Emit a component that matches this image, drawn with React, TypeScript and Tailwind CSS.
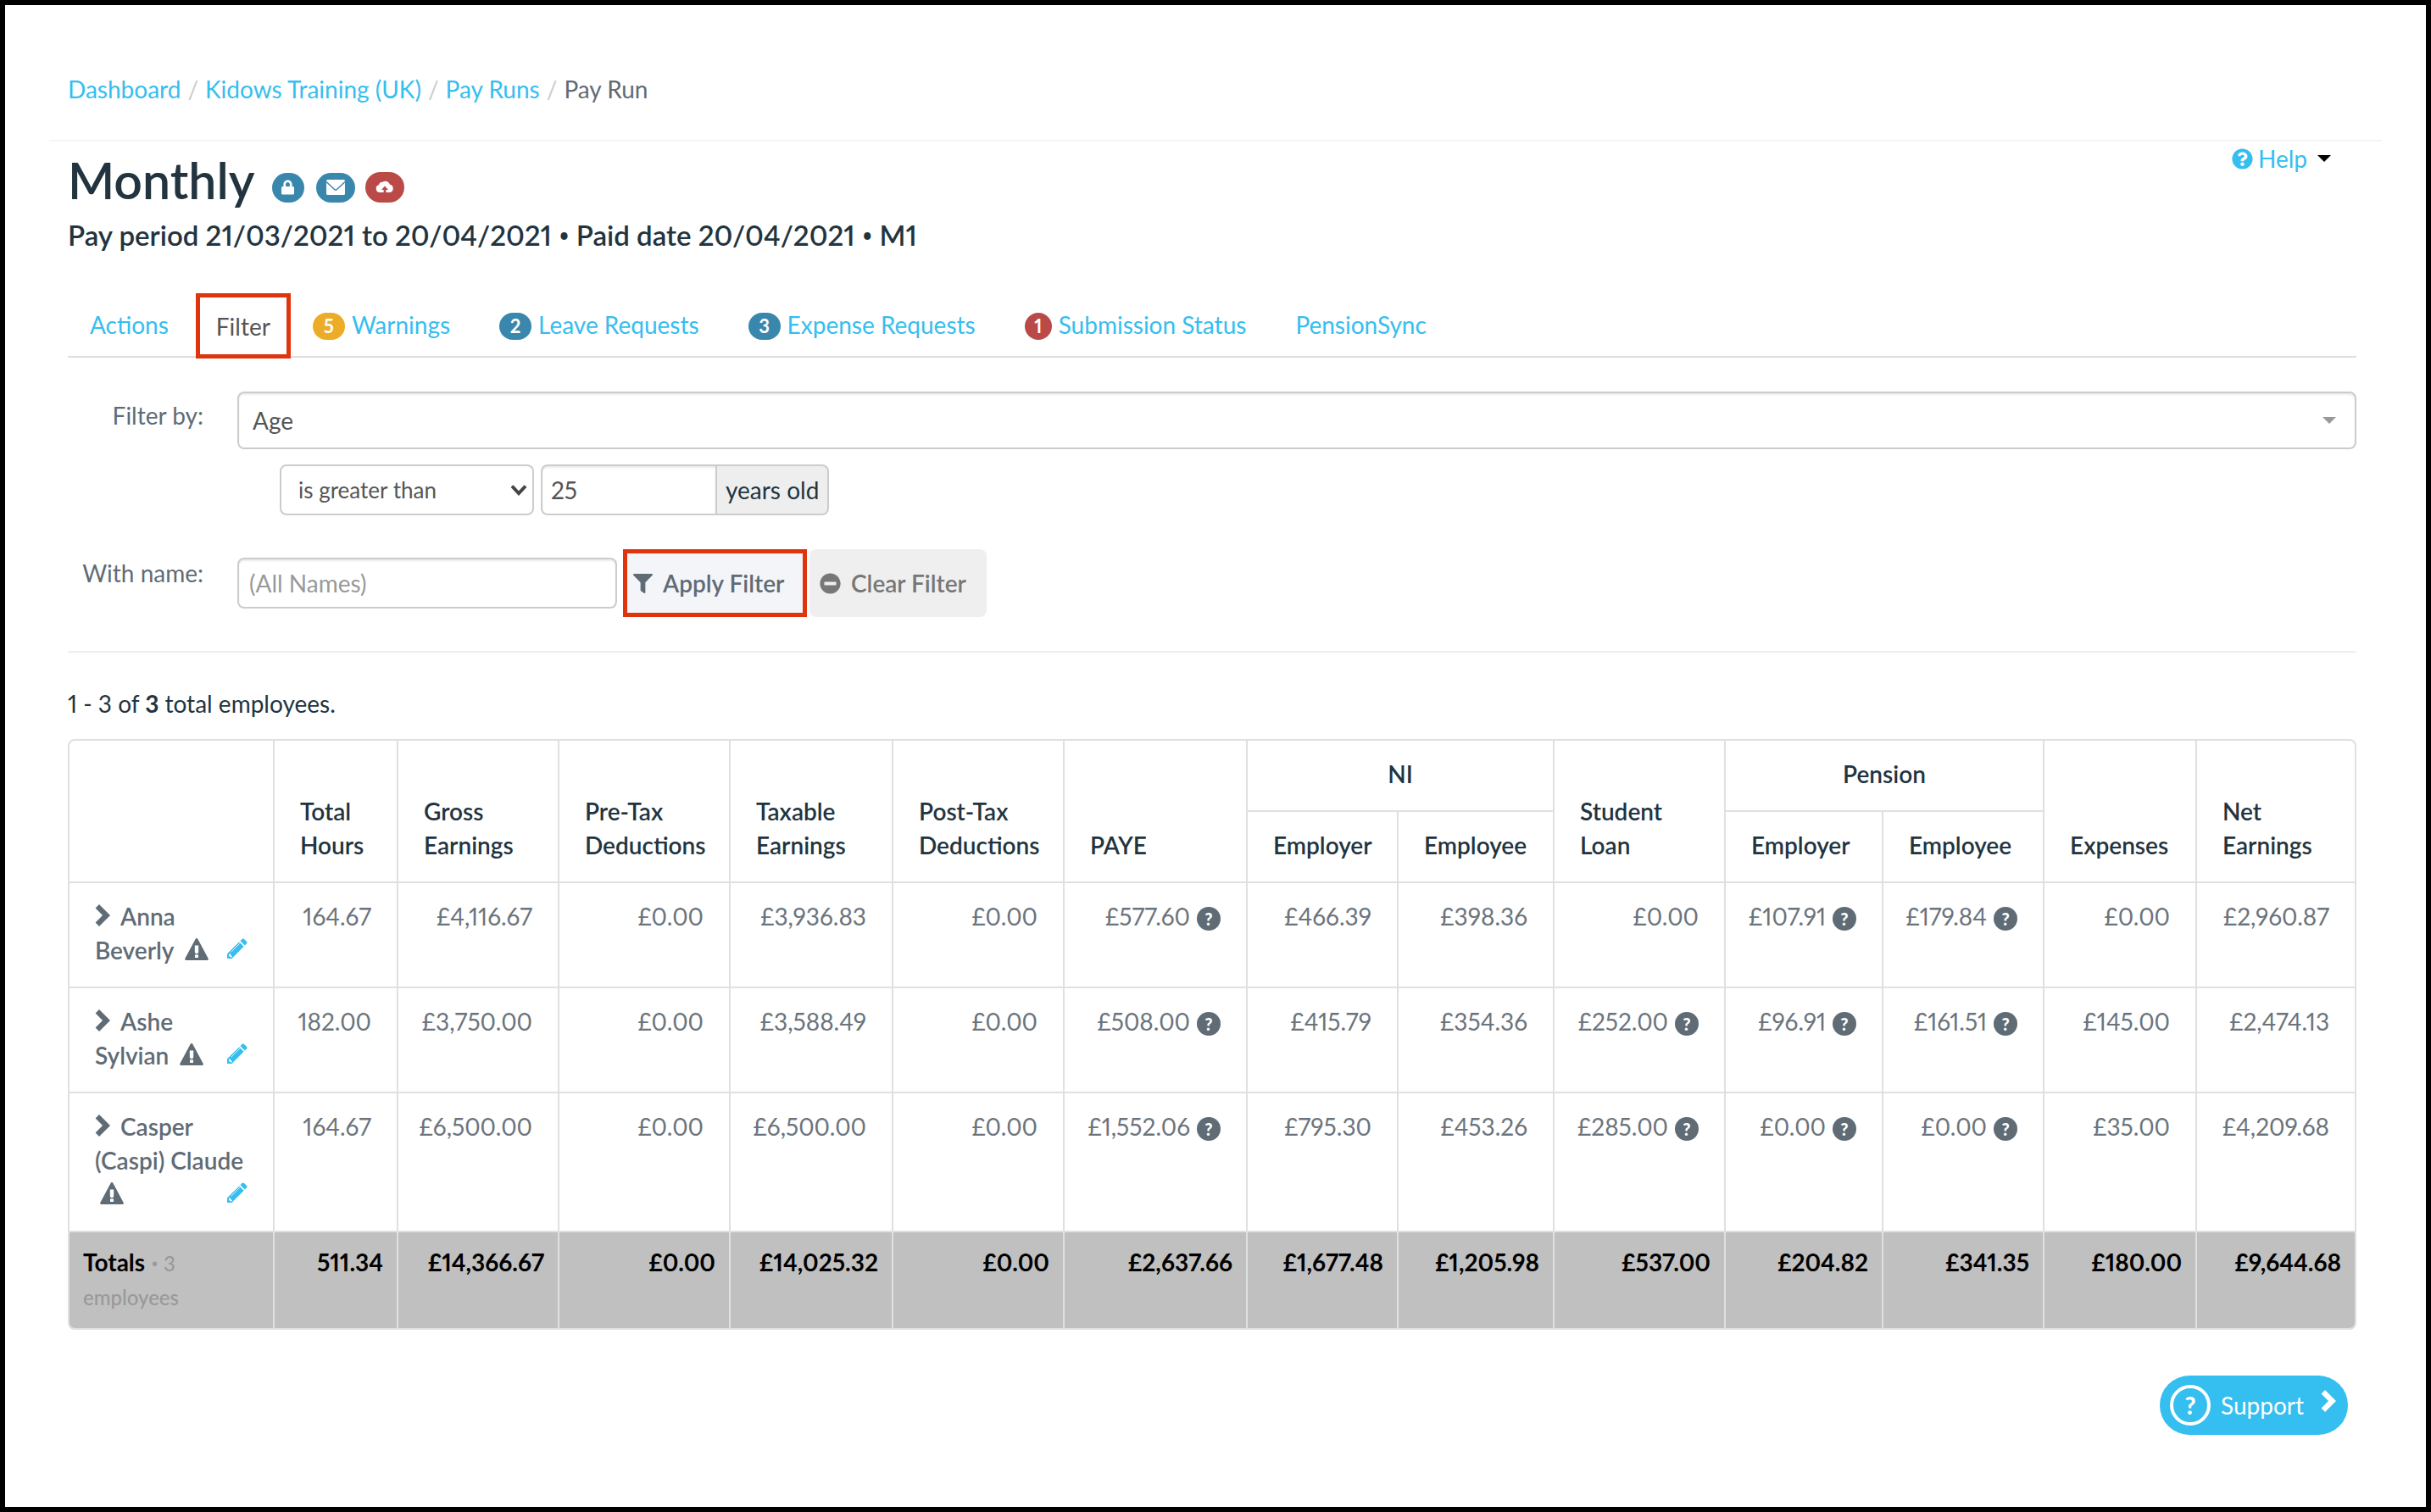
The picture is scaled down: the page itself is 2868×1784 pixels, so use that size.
import { useState } from "react";
import { FaFilter, FaLock, FaMinusCircle, FaQuestionCircle } from "react-icons/fa";

const tabs = [
  { name: "Actions" },
  { name: "Filter" },
  { name: "Warnings", count: 5, badge: "w-[38px] bg-[#edac27]" },
  { name: "Leave Requests", count: 2, badge: "w-[38px] bg-[#3a87ad]" },
  { name: "Expense Requests", count: 3, badge: "w-[38px] bg-[#3a87ad]" },
  { name: "Submission Status", count: 1, badge: "w-8 bg-[#b94a48]" },
  { name: "PensionSync" },
];

// hint marks the columns that carry a "?" after the amount
const employees = [
  {
    name: "Anna Beverly",
    cells: ["164.67", "£4,116.67", "£0.00", "£3,936.83", "£0.00", "£577.60", "£466.39", "£398.36", "£0.00", "£107.91", "£179.84", "£0.00", "£2,960.87"],
    hint: [5, 9, 10],
  },
  {
    name: "Ashe Sylvian",
    cells: ["182.00", "£3,750.00", "£0.00", "£3,588.49", "£0.00", "£508.00", "£415.79", "£354.36", "£252.00", "£96.91", "£161.51", "£145.00", "£2,474.13"],
    hint: [5, 8, 9, 10],
  },
  {
    name: "Casper (Caspi) Claude",
    cells: ["164.67", "£6,500.00", "£0.00", "£6,500.00", "£0.00", "£1,552.06", "£795.30", "£453.26", "£285.00", "£0.00", "£0.00", "£35.00", "£4,209.68"],
    hint: [5, 8, 9, 10],
  },
];

const totals = ["511.34", "£14,366.67", "£0.00", "£14,025.32", "£0.00", "£2,637.66", "£1,677.48", "£1,205.98", "£537.00", "£204.82", "£341.35", "£180.00", "£9,644.68"];

const line = "border-[#dfe0e0]";
const headCell = `border-r-2 border-b-2 last:border-r-0 ${line} px-[30px] pt-[19px] pb-[23px] text-left align-bottom font-semibold text-[#22343f]`;
const field = "h-[60px] border-2 border-[#ccc] bg-white text-[#555] shadow-[inset_0_2px_2px_rgba(0,0,0,0.08)]";

function Chevron({ className }: { className: string }) {
  return (
    <svg viewBox="0 0 18 26" className={className} fill="currentColor" aria-hidden="true">
      <path d="M5 0 18 13 5 26 .6 21.600 9 13 .6 4.400z" />
    </svg>
  );
}

function Warning() {
  return (
    <svg viewBox="0 0 28 26" className="ml-1.5 inline-block h-[26px] w-7 align-[-1px]" aria-label="Warning">
      <path d="M12.6.9a1.6 1.6 0 0 1 2.8 0l12.3 23a1.4 1.4 0 0 1-1.2 2.1h-25a1.4 1.4 0 0 1-1.2-2.1z" fill="#5f6b75" />
      <path d="M11.8 8.6h4.4v7.6l-1 2h-2.4l-1-2zM12 19.6h4V23h-4z" fill="#fff" />
    </svg>
  );
}

function Pencil() {
  return (
    <svg viewBox="0 0 24 24" className="inline-block h-6 w-6 align-[1px]" fill="#35bef0" aria-hidden="true">
      <path d="M17.4 1.2a2 2 0 0 1 2.8 0l2.6 2.6a2 2 0 0 1 0 2.8L20.800 8.600 15.400 3.200z" />
      <path d="M14.200 4.400l5.400 5.400L7 22.600 5.600 24H0v-5.600L1.400 17z" />
      <path d="M4.600 16.400 15 6" stroke="#fff" strokeWidth="0.8" />
      <path d="M2.200 18.400l1.600.2.600 1.800 1.600.600-.8 1.400-1.800-.4-1.400-1.600z" fill="#fff" />
    </svg>
  );
}

function Hint() {
  return (
    <span className="ml-2 inline-block h-7 w-7 rounded-full bg-[#5f6b75] text-center text-[20px] leading-7 font-black text-white">
      ?
    </span>
  );
}

export default function App() {
  const [active, setActive] = useState("Filter");
  const [age, setAge] = useState("25");
  const [name, setName] = useState("");

  return (
    <div className="min-h-screen border-6 border-black bg-white px-13 pt-[79px] pb-10 font-['Lato',sans-serif] text-[28px] leading-10 text-[#22343f] proportional-nums">
      {/* Breadcrumb */}
      <nav className="border-b-2 border-[#f5f5f5] pb-10 pl-[22px]">
        <ol className="flex gap-2 text-[#35bef0]">
          <li><a href="#dashboard">Dashboard</a></li>
          <li className="text-[#ccc]">/</li>
          <li><a href="#company">Kidows Training (UK)</a></li>
          <li className="text-[#ccc]">/</li>
          <li><a href="#payruns">Pay Runs</a></li>
          <li className="text-[#ccc]">/</li>
          <li className="text-[#5f6b75]">Pay Run</li>
        </ol>
      </nav>

      <main className="pr-[30px] pl-[22px]">
        {/* Title */}
        <header className="flex items-start justify-between">
          <div className="pt-2">
            <div className="flex items-center">
              <h1 className="text-[59px] leading-[76px] font-semibold">Monthly</h1>
              <span className="mt-4 ml-5 flex h-[35px] w-[38px] items-center justify-center rounded-full bg-[#3a87ad] text-white">
                <FaLock className="h-[18px] w-[15px]" />
              </span>
              <span className="mt-4 ml-3.5 flex h-[35px] w-[46px] items-center justify-center rounded-full bg-[#3a87ad]">
                <svg viewBox="0 0 22 18" className="h-[18px] w-[22px]" aria-label="Emailed">
                  <rect width="22" height="18" rx="1.5" fill="#fff" />
                  <path d="M0 2.5 9.6 11.4a2 2 0 0 0 2.8 0L22 2.5" fill="none" stroke="#3a87ad" strokeWidth="1.4" />
                </svg>
              </span>
              <span className="mt-4 ml-3 flex h-9 w-[46px] items-center justify-center rounded-full bg-[#b94a48]">
                <svg viewBox="0 0 22 16" className="h-4 w-[22px]" aria-label="Submission">
                  <path d="M5 14a4.6 4.6 0 0 1-1-9A4.4 4.4 0 0 1 8.4 1.8 5.5 5.5 0 0 1 17 4.8 4.7 4.7 0 0 1 17 14z" fill="#fff" />
                  <path d="M11 6.5 15 11h-2.6v4H9.6v-4H7z" fill="#b94a48" />
                </svg>
              </span>
            </div>
            <p className="mt-1.5 text-[33px] font-semibold">
              Pay period 21/03/2021 to 20/04/2021 <span className="font-['Open_Sans']">•</span> Paid date
              20/04/2021 <span className="font-['Open_Sans']">•</span> M1
            </p>
          </div>
          <button type="button" className="mr-[30px] flex items-center text-[#35bef0]">
            <FaQuestionCircle className="mr-1.5 h-[25px] w-[25px]" />
            Help
            <svg viewBox="0 0 16 8" className="ml-3 h-2 w-4" fill="#000" aria-hidden="true">
              <path d="M0 0h16L8 8z" />
            </svg>
          </button>
        </header>

        {/* Tabs */}
        <ul className="mt-12 flex h-19 border-b-2 border-[#dedede]">
          {tabs.map((tab) => (
            <li key={tab.name}>
              <a
                href={`#${tab.name}`}
                onClick={() => setActive(tab.name)}
                className={
                  tab.name === active
                    ? "flex h-[77px] items-center border-5 border-[#e0340c] px-[19px] text-[#555]"
                    : "flex h-[74px] items-center pr-8 pl-[26px] text-[#35bef0]"
                }
              >
                {tab.count && (
                  <span className={`mt-1 mr-2 flex h-8 items-center justify-center rounded-full text-[22px] font-bold text-white ${tab.badge}`}>
                    {tab.count}
                  </span>
                )}
                {tab.name}
              </a>
            </li>
          ))}
        </ul>

        {/* Filter form */}
        <form className="border-b-2 border-[#eee] py-10" onSubmit={(e) => e.preventDefault()}>
          <div className="flex gap-10">
            <label htmlFor="filterBy" className="w-40 pt-2 text-right text-[#5f6b75]">Filter by:</label>
            <div className="flex-1">
              <div className="relative">
                <select
                  id="filterBy"
                  className="h-[68px] w-full appearance-none rounded-lg border-2 border-[#ccc] bg-white px-4 text-[#555] shadow-[inset_0_2px_2px_rgba(0,0,0,0.08)]"
                >
                  <option>Age</option>
                </select>
                <svg viewBox="0 0 16 8" className="pointer-events-none absolute top-[30px] right-6 h-2 w-4" fill="#999" aria-hidden="true">
                  <path d="M0 0h16L8 8z" />
                </svg>
              </div>
              <div className="mt-[18px] ml-[50px] flex">
                <div className="relative mr-2">
                  <select
                    aria-label="Comparison"
                    className="h-[60px] w-[300px] appearance-none rounded-lg border-2 border-[#ccc] bg-white px-5 text-[26px] text-[#555]"
                  >
                    <option>is greater than</option>
                  </select>
                  <svg viewBox="0 0 20 14" className="pointer-events-none absolute top-[23px] right-2 h-3.5 w-5" aria-hidden="true">
                    <path d="M2 2.5 10 11l8-8.5" fill="none" stroke="#444" strokeWidth="4" />
                  </svg>
                </div>
                <input
                  aria-label="Age in years"
                  value={age}
                  onChange={(e) => setAge(e.target.value)}
                  className={`${field} w-[208px] rounded-l-lg px-2.5`}
                />
                <span className="flex h-[60px] items-center rounded-r-lg border-2 border-l-0 border-[#ccc] bg-[#eee] px-2.5">
                  years old
                </span>
              </div>
            </div>
          </div>

          <div className="mt-10 flex">
            <label htmlFor="withName" className="mr-10 w-40 pt-2 text-right text-[#5f6b75]">With name:</label>
            <input
              id="withName"
              value={name}
              onChange={(e) => setName(e.target.value)}
              placeholder="(All Names)"
              className={`${field} mt-2.5 mr-[7px] w-[448px] rounded-lg px-3 placeholder:text-[#999]`}
            />
            <button
              type="submit"
              className="flex h-20 w-[217px] items-center border-5 border-[#e0340c] bg-[#f4f5f9] pl-[7px] font-semibold text-[#5f6b75]"
            >
              <FaFilter className="mr-3 h-[23px] w-[23px]" />
              Apply Filter
            </button>
            <button
              type="button"
              onClick={() => setName("")}
              className="ml-[3px] flex h-20 w-[209px] items-center rounded-lg bg-[#efefef] pl-3 font-semibold text-[#777]"
            >
              <FaMinusCircle className="mr-3 h-[25px] w-[25px]" />
              Clear Filter
            </button>
          </div>
        </form>

        <p className="mt-10">
          1 - 3 of <strong>3</strong> total employees.
        </p>

        {/* Pay run table */}
        <div className={`mt-[22px] overflow-hidden rounded-lg border-2 ${line}`}>
          <table className="w-full table-fixed border-separate border-spacing-0">
            <colgroup>
              <col className="w-[242px]" />
              <col className="w-[146px]" />
              <col className="w-[190px]" />
              <col className="w-[202px]" />
              <col className="w-[192px]" />
              <col className="w-[202px]" />
              <col className="w-[216px]" />
              <col className="w-[178px]" />
              <col className="w-[184px]" />
              <col className="w-[202px]" />
              <col className="w-[186px]" />
              <col className="w-[190px]" />
              <col className="w-[180px]" />
              <col className="w-[186px]" />
            </colgroup>
            <thead>
              <tr>
                <td rowSpan={2} className={headCell}></td>
                <th rowSpan={2} className={headCell}>Total Hours</th>
                <th rowSpan={2} className={headCell}>Gross Earnings</th>
                <th rowSpan={2} className={headCell}>Pre-Tax Deductions</th>
                <th rowSpan={2} className={headCell}>Taxable Earnings</th>
                <th rowSpan={2} className={headCell}>Post-Tax Deductions</th>
                <th rowSpan={2} className={headCell}>PAYE</th>
                <th colSpan={2} className={headCell}><div className="text-center">NI</div></th>
                <th rowSpan={2} className={headCell}>Student Loan</th>
                <th colSpan={2} className={headCell}><div className="text-center">Pension</div></th>
                <th rowSpan={2} className={headCell}>Expenses</th>
                <th rowSpan={2} className={headCell}>Net Earnings</th>
              </tr>
              <tr>
                <th className={headCell}>Employer</th>
                <th className={headCell}>Employee</th>
                <th className={headCell}>Employer</th>
                <th className={`${headCell} last:border-r-2`}>Employee</th>
              </tr>
            </thead>
            <tbody>
              {employees.map((employee) => (
                <tr key={employee.name} className="align-top">
                  <th className={`border-r-2 border-b-2 ${line} px-[30px] pt-[19px] pb-[23px] text-left font-semibold text-[#5f6b75]`}>
                    <Chevron className="mr-3 inline-block h-[26px] w-[18px] align-[-1px]" />
                    {employee.name} <Warning />
                    <a href="#edit" aria-label={`Edit ${employee.name}`} className="float-right">
                      <Pencil />
                    </a>
                  </th>
                  {employee.cells.map((value, i) => (
                    <td
                      key={i}
                      className={`border-r-2 border-b-2 last:border-r-0 ${line} pt-[19px] pr-[30px] pb-[23px] text-right whitespace-nowrap text-[#6b747d]`}
                    >
                      {value}
                      {employee.hint.includes(i) && <Hint />}
                    </td>
                  ))}
                </tr>
              ))}
            </tbody>
            <tfoot>
              <tr className="bg-[#c0c0c0] align-top font-bold text-black">
                <th className={`border-r-2 ${line} px-4 pt-[15px] pb-[18px] text-left`}>
                  Totals{" "}
                  <small className="text-[24px] leading-8 font-medium text-[#999]">
                    <span className="font-['Open_Sans']">•</span> 3 employees
                  </small>
                </th>
                {totals.map((total, i) => (
                  <td key={i} className={`border-r-2 last:border-r-0 ${line} px-4 pt-[15px] pb-[18px] text-right`}>
                    {total}
                  </td>
                ))}
              </tr>
            </tfoot>
          </table>
        </div>

        {/* Support button */}
        <div className="mt-[54px] mr-2.5 flex justify-end">
          <button type="button" className="flex h-[70px] items-center rounded-full bg-[#35bef0] pr-3.5 pl-3 text-white">
            <span className="mr-3 flex h-12 w-12 items-center justify-center rounded-full border-4 border-white text-[28px] font-black">
              ?
            </span>
            Support
            <Chevron className="mb-2.5 ml-5 h-[26px] w-[18px]" />
          </button>
        </div>
      </main>
    </div>
  );
}
